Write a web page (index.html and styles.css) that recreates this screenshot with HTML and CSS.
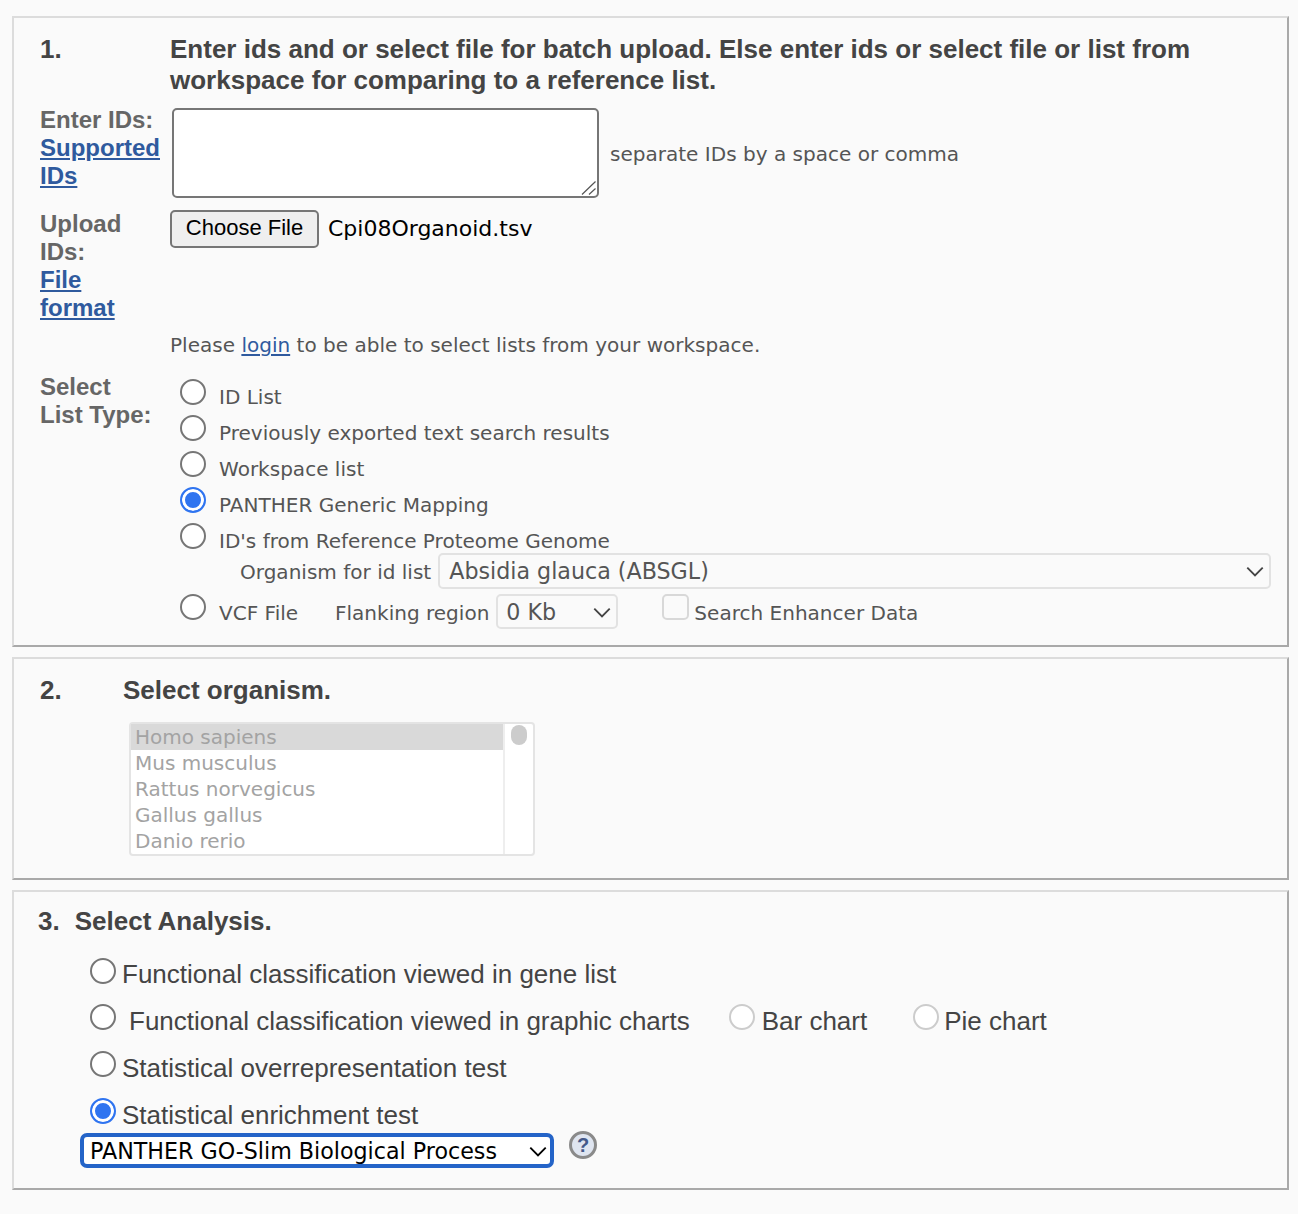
FILE: index.html
```html
<!DOCTYPE html>
<html lang="en">
<head>
    <meta charset="UTF-8">
    <title>Gene List Analysis</title>
    <link rel="stylesheet" href="styles.css">
</head>
<body>
    <form class="page">
        <section class="panel panel-ids">
            <div class="row row-head">
                <div class="side step">1.</div>
                <h2 class="step">Enter ids and or select file for batch upload. Else enter ids or select file or list from workspace for comparing to a reference list.</h2>
            </div>
            <div class="row row-enter">
                <div class="side side-enter">Enter IDs:<br><a href="#">Supported IDs</a></div>
                <div class="enter-main">
                    <div class="textarea-wrap">
                        <textarea class="ids"></textarea>
                        <svg class="grip" viewBox="0 0 16 14"><path d="M1 13.5 L14.5 0.5 M8 13.5 L14.5 7.5"/></svg>
                    </div>
                    <span class="hint">separate IDs by a space or comma</span>
                </div>
            </div>
            <div class="row row-upload">
                <div class="side">Upload IDs:<br><a href="#">File format</a></div>
                <div class="file-line">
                    <button type="button" class="choose">Choose File</button>
                    <span class="file-name">Cpi08Organoid.tsv</span>
                </div>
            </div>
            <div class="row row-login">
                <div class="side"></div>
                <p class="login-note">Please <a href="#">login</a> to be able to select lists from your workspace.</p>
            </div>
            <div class="row row-types">
                <div class="side">Select<br>List Type:</div>
                <div class="types">
                    <label class="type"><input type="radio" name="listType"><span>ID List</span></label>
                    <label class="type"><input type="radio" name="listType"><span>Previously exported text search results</span></label>
                    <label class="type"><input type="radio" name="listType"><span>Workspace list</span></label>
                    <label class="type"><input type="radio" name="listType" checked><span>PANTHER Generic Mapping</span></label>
                    <label class="type"><input type="radio" name="listType"><span>ID's from Reference Proteome Genome</span></label>
                    <div class="organism-line">
                        <span class="organism-label">Organism for id list</span>
                        <div class="select-wrap select-organism">
                            <select disabled><option>Absidia glauca (ABSGL)</option></select>
                            <svg class="chevron" viewBox="0 0 16 10"><path d="M1 1.5 L8 8.5 L15 1.5"/></svg>
                        </div>
                    </div>
                    <div class="vcf-line">
                        <label class="type"><input type="radio" name="listType"><span>VCF File</span></label>
                        <span class="flank-label">Flanking region</span>
                        <div class="select-wrap select-flank">
                            <select disabled><option>0 Kb</option></select>
                            <svg class="chevron" viewBox="0 0 16 10"><path d="M1 1.5 L8 8.5 L15 1.5"/></svg>
                        </div>
                        <input type="checkbox" class="enhancer" disabled>
                        <span class="enhancer-label">Search Enhancer Data</span>
                    </div>
                </div>
            </div>
        </section>

        <section class="panel panel-organism">
            <div class="organism-head">
                <div class="step">2.</div>
                <h2 class="step">Select organism.</h2>
            </div>
            <div class="listbox">
                <ul>
                    <li class="selected">Homo sapiens</li>
                    <li>Mus musculus</li>
                    <li>Rattus norvegicus</li>
                    <li>Gallus gallus</li>
                    <li>Danio rerio</li>
                </ul>
                <div class="listbox-track"><div class="listbox-thumb"></div></div>
            </div>
        </section>

        <section class="panel panel-analysis">
            <div class="analysis-head">
                <div class="step">3.</div>
                <h2 class="step">Select Analysis.</h2>
            </div>
            <div class="analysis-list">
                <label class="analysis analysis-first"><input type="radio" name="analysis"><span>Functional classification viewed in gene list</span></label>
                <div class="analysis analysis-charts">
                    <label class="analysis"><input type="radio" name="analysis"><span class="charts-text">Functional classification viewed in graphic charts</span></label>
                    <label class="analysis chart-opt bar-opt"><input type="radio" name="chart" disabled><span>Bar chart</span></label>
                    <label class="analysis chart-opt pie-opt"><input type="radio" name="chart" disabled><span>Pie chart</span></label>
                </div>
                <label class="analysis"><input type="radio" name="analysis"><span>Statistical overrepresentation test</span></label>
                <label class="analysis"><input type="radio" name="analysis" checked><span>Statistical enrichment test</span></label>
            </div>
            <div class="annotation-line">
                <div class="select-wrap select-annotation">
                    <select><option>PANTHER GO-Slim Biological Process</option></select>
                    <svg class="chevron" viewBox="0 0 16 10"><path d="M1 1.5 L8 8.5 L15 1.5"/></svg>
                </div>
                <svg class="help" viewBox="0 0 30 30">
                    <circle cx="15" cy="15" r="12.5"/>
                    <text x="15" y="22" text-anchor="middle">?</text>
                </svg>
            </div>
        </section>
    </form>
</body>
</html>
```

FILE: styles.css
```css
* {
    box-sizing: border-box;
}
body {
    margin: 0;
    background: #fafafa;
    color: #555;
    font-family: "Liberation Sans", Arial, sans-serif;
    min-height: 1214px;
}
a {
    color: #2f5a9e;
}
.page {
    padding: 16px 9px 0 12px;
    display: flex;
    flex-direction: column;
    gap: 10px;
}
.panel {
    border: 2px solid;
    border-color: #dcdcdc #a9a9a9 #a9a9a9 #dcdcdc;
    background: #fafafa;
}
.panel-ids {
    height: 631px;
    padding: 16px 16px 0 26px;
}
.panel-organism {
    height: 223px;
    padding: 16px 0 0 26px;
}
.panel-analysis {
    height: 300px;
    padding: 14px 0 0 24px;
}
.step {
    margin: 0;
    font-size: 26px;
    line-height: 31px;
    font-weight: bold;
    color: #444;
}
.row {
    display: grid;
    grid-template-columns: 130px 1fr;
}
.side {
    max-width: 122px;
    font-size: 24px;
    line-height: 28px;
    font-weight: bold;
    color: #666;
}
.side.step {
    font-size: 26px;
    line-height: 31px;
    color: #444;
}
.side-enter {
    padding-top: 1px;
}
.row-head {
    margin-bottom: 9px;
}
.row-enter {
    height: 105px;
}
.enter-main {
    display: flex;
    align-items: flex-start;
    gap: 11px;
    padding-top: 3px;
}
.textarea-wrap {
    position: relative;
    margin-left: 2px;
    width: 427px;
    height: 90px;
}
.ids {
    display: block;
    width: 100%;
    height: 100%;
    background: #fff;
    border: 2px solid #767676;
    border-radius: 5px;
    outline: none;
    resize: none;
}
.grip {
    position: absolute;
    right: 2px;
    bottom: 3px;
    width: 16px;
    height: 14px;
    fill: none;
    stroke: #555;
    stroke-width: 1.2;
}
.hint {
    margin-top: 32px;
    font-family: "DejaVu Sans", Verdana, sans-serif;
    font-size: 20.05px;
    line-height: 28px;
}
.row-upload {
    height: 121px;
}
.file-line {
    display: flex;
    align-items: flex-start;
    gap: 9px;
}
.choose {
    width: 149px;
    height: 38px;
    background: #efefef;
    border: 2px solid #767676;
    border-radius: 5px;
    color: #000;
    font-family: "Liberation Sans", Arial, sans-serif;
    font-size: 22px;
    padding: 0 0 2px;
}
.file-name {
    font-family: "DejaVu Sans", Verdana, sans-serif;
    font-size: 22px;
    line-height: 38px;
    color: #000;
}
.row-login {
    height: 42px;
}
.login-note {
    margin: 0;
    font-family: "DejaVu Sans", Verdana, sans-serif;
    font-size: 20.05px;
    line-height: 28px;
    color: #555;
}
.types {
    font-family: "DejaVu Sans", Verdana, sans-serif;
    font-size: 20.05px;
    padding: 6px 0 0 10px;
    display: flex;
    flex-direction: column;
}
.type {
    display: flex;
    align-items: flex-start;
    height: 36px;
}
.type span {
    margin-top: 4px;
    line-height: 28px;
}
input[type="radio"] {
    appearance: none;
    margin: 0 13px 0 0;
    flex: none;
    width: 26px;
    height: 26px;
    background: #fff;
    border: 2px solid #767676;
    border-radius: 50%;
}
input[type="radio"]:checked {
    border-color: #2f74f0;
    background: #2f74f0;
    box-shadow: inset 0 0 0 3px #fff;
}
input[type="radio"]:disabled {
    border-color: #ccc;
}
.organism-line {
    display: flex;
    align-items: center;
    gap: 7px;
    padding-left: 60px;
    margin-top: -5px;
    height: 34px;
}
.organism-label {
    padding-top: 2px;
}
.select-wrap {
    position: relative;
}
.select-wrap select {
    appearance: none;
    display: block;
    width: 100%;
    height: 100%;
    background: #fafafa;
    border: 2px solid #e2e2e2;
    border-radius: 5px;
    color: #555;
    font-family: "DejaVu Sans", Verdana, sans-serif;
    font-size: 22.2px;
    padding: 0 0 0 8px;
    opacity: 1;
}
.chevron {
    position: absolute;
    right: 7px;
    top: 50%;
    width: 18px;
    height: 11px;
    margin-top: -5px;
    fill: none;
    stroke: #444;
    stroke-width: 1.7;
    pointer-events: none;
}
.select-organism {
    flex: 1;
    height: 36px;
}
.select-organism select {
    padding-left: 9px;
}
.vcf-line {
    display: flex;
    align-items: flex-start;
    height: 40px;
    margin-top: 6px;
}
.vcf-line .type {
    width: 155px;
}
.vcf-line .type span {
    margin-top: 5px;
}
.flank-label {
    margin-top: 5px;
    line-height: 28px;
    margin-right: 7px;
}
.select-flank {
    width: 122px;
    height: 35px;
}
.enhancer {
    appearance: none;
    margin: 0 5px 0 44px;
    width: 27px;
    height: 26px;
    background: #fafafa;
    border: 2px solid #d8d8d8;
    border-radius: 5px;
}
.enhancer-label {
    margin-top: 5px;
    line-height: 28px;
}
.organism-head {
    display: flex;
    margin-bottom: 16px;
}
.organism-head .step:first-child {
    width: 83px;
}
.listbox {
    display: flex;
    margin-left: 89px;
    width: 406px;
    height: 134px;
    border: 2px solid #e4e4e4;
    border-radius: 4px;
    background: #fff;
}
.listbox ul {
    flex: 1;
    margin: 0;
    padding: 0;
    list-style: none;
    font-family: "DejaVu Sans", Verdana, sans-serif;
    font-size: 20px;
    color: #a3a3a3;
}
.listbox li {
    height: 26px;
    line-height: 26px;
    padding-left: 4px;
}
.listbox li.selected {
    background: #d9d9d9;
}
.listbox-track {
    width: 30px;
    border-left: 2px solid #eee;
    padding: 1px 0 0 6px;
}
.listbox-thumb {
    width: 16px;
    height: 20px;
    border-radius: 8px;
    background: #ccc;
}
.analysis-head {
    display: flex;
    gap: 15px;
}
.analysis-list {
    margin: 21px 0 0 52px;
    display: flex;
    flex-direction: column;
    gap: 21px;
}
.analysis {
    display: flex;
    align-items: flex-start;
    height: 26px;
    font-size: 26px;
    line-height: 30px;
    color: #444;
}
.analysis input[type="radio"] {
    margin: -1px 6px 0 0;
}
.analysis-first input[type="radio"] {
    margin-top: 0;
}
.analysis .bar-opt input[type="radio"] {
    margin-right: 7px;
}
.analysis .pie-opt input[type="radio"] {
    margin-right: 5px;
}
.analysis span {
    margin-top: 1px;
    white-space: nowrap;
}
.analysis .charts-text {
    margin-left: 7px;
}
.bar-opt {
    margin-left: 39px;
}
.pie-opt {
    margin-left: 46px;
}
.annotation-line {
    margin: 8px 0 0 42px;
    display: flex;
    align-items: flex-start;
}
.select-annotation {
    width: 474px;
    height: 35px;
}
.select-annotation select {
    background: #fff;
    border: 4px solid #2464c8;
    border-radius: 7px;
    color: #000;
    outline: none;
    padding-left: 6px;
}
.select-annotation .chevron {
    stroke: #000;
}
.help {
    margin: -3px 0 0 14px;
    width: 30px;
    height: 30px;
}
.help circle {
    fill: #dfe5f0;
    stroke: #8a8a8a;
    stroke-width: 3;
}
.help text {
    fill: #44598a;
    font-family: "Liberation Sans", Arial, sans-serif;
    font-size: 20px;
    font-weight: bold;
}
```
